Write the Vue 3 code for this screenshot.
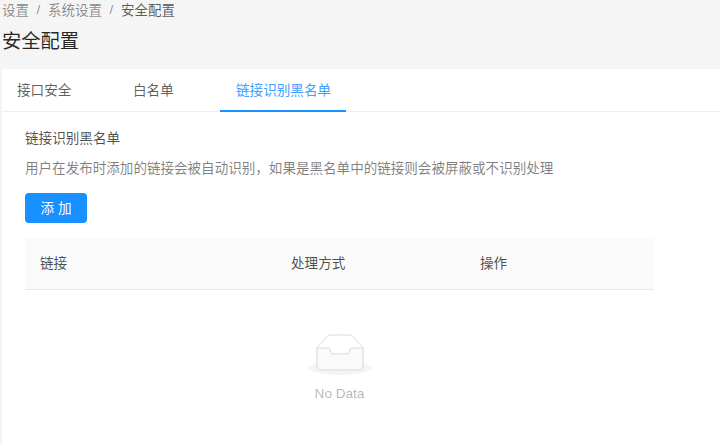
<script setup>
const tabs = [
  { label: '接口安全', w: 116 },
  { label: '白名单', w: 102 },
  { label: '链接识别黑名单', w: 126, active: true },
]
</script>

<template>
  <div class="page">
    <header class="head">
      <nav class="crumbs">
        <span>设置</span><i>/</i><span>系统设置</span><i>/</i><span class="cur">安全配置</span>
      </nav>
      <h1>安全配置</h1>
    </header>
    <main class="card">
      <div class="tabs">
        <div
          v-for="t in tabs"
          :key="t.label"
          class="tab"
          :class="{ active: t.active }"
          :style="{ width: t.w + 'px' }"
        >{{ t.label }}</div>
      </div>
      <section class="body">
        <h2>链接识别黑名单</h2>
        <p>用户在发布时添加的链接会被自动识别，如果是黑名单中的链接则会被屏蔽或不识别处理</p>
        <button type="button">添 加</button>
        <div class="table">
          <div class="thead">
            <div class="c1">链接</div>
            <div class="c2">处理方式</div>
            <div class="c3">操作</div>
          </div>
          <div class="empty">
            <svg width="64" height="41" viewBox="0 0 64 41">
              <g transform="translate(0 1)" fill="none" fill-rule="evenodd">
                <ellipse fill="#f5f5f5" cx="32" cy="33" rx="32" ry="7" />
                <g fill-rule="nonzero" stroke="#d9d9d9">
                  <path d="M55 12.76L44.854 1.258C44.367.474 43.656 0 42.907 0H21.093c-.749 0-1.46.474-1.947 1.257L9 12.761V22h46v-9.24z" />
                  <path d="M41.613 15.931c0-1.605.994-2.93 2.227-2.931H55v18.137C55 33.26 53.68 35 52.05 35h-40.1C10.32 35 9 33.259 9 31.137V13h11.16c1.233 0 2.227 1.323 2.227 2.928v.022c0 1.605 1.005 2.901 2.237 2.901h14.752c1.232 0 2.237-1.308 2.237-2.913v-.007z" fill="#fafafa" />
                </g>
              </g>
            </svg>
            <div class="nodata">No Data</div>
          </div>
        </div>
      </section>
    </main>
  </div>
</template>

<style>
html, body { margin: 0; background: #f5f5f5; }
</style>

<style scoped>
.page {
  width: 720px;
  height: 445px;
  overflow: hidden;
  display: flex;
  flex-direction: column;
  background: #f5f5f5;
  font-family: "Liberation Sans", "Noto Sans CJK SC", sans-serif;
}
.head { height: 69px; padding-left: 2px; flex: none; }
.crumbs {
  display: flex;
  height: 18px;
  align-items: center;
  font-size: 13.5px;
  color: rgba(0, 0, 0, 0.45);
}
.crumbs i { font-style: normal; margin: 0 7.6px; }
.crumbs .cur { color: rgba(0, 0, 0, 0.65); }
h1 {
  margin: 10px 0 0;
  font-size: 19.3px;
  line-height: 28px;
  font-weight: 400;
  color: rgba(0, 0, 0, 0.85);
}
.card { margin-left: 2px; flex: 1; background: #fff; }
.tabs {
  display: flex;
  height: 43px;
  box-sizing: border-box;
  border-bottom: 1px solid #efefef;
}
.tab {
  box-sizing: border-box;
  height: 43px;
  padding: 13px 0 0 15px;
  font-size: 13.6px;
  line-height: 18px;
  color: rgba(0, 0, 0, 0.65);
}
.tab.active {
  color: #40a0ff;
  border-bottom: 2px solid #1890ff;
  padding-left: 16px;
}
.body { padding: 18px 0 0 23px; width: 629px; }
h2 {
  margin: 0;
  font-size: 13.6px;
  line-height: 18px;
  font-weight: 400;
  color: rgba(0, 0, 0, 0.7);
}
p {
  margin: 12px 0 0;
  font-size: 13.55px;
  line-height: 18px;
  color: rgba(0, 0, 0, 0.5);
}
button {
  display: block;
  margin-top: 15px;
  width: 62px;
  height: 30px;
  padding: 0 0 2px;
  border: 0;
  border-radius: 4px;
  background: #1890ff;
  color: #fff;
  font: inherit;
  font-size: 13.6px;
}
.table { margin-top: 15px; }
.thead {
  display: flex;
  box-sizing: border-box;
  height: 52px;
  padding-bottom: 3px;
  align-items: center;
  background: #fafafa;
  border-bottom: 1px solid #e8e8e8;
  border-radius: 4px 4px 0 0;
  font-size: 13.6px;
  color: rgba(0, 0, 0, 0.7);
}
.c1 { width: 251px; padding-left: 15px; }
.c2 { width: 189px; }
.empty {
  display: flex;
  flex-direction: column;
  align-items: center;
  padding-top: 44px;
}
.empty svg { display: block; }
.nodata {
  margin-top: 10px;
  font-size: 13.6px;
  line-height: 18px;
  color: rgba(0, 0, 0, 0.3);
}
</style>
